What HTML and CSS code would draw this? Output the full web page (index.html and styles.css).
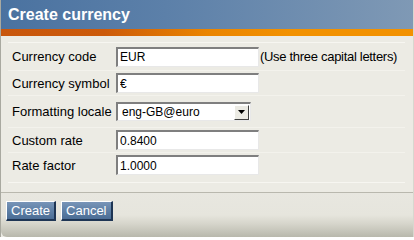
FILE: index.html
```html
<!DOCTYPE html>
<html>
<head>
<meta charset="utf-8">
<link rel="stylesheet" href="styles.css">
</head>
<body>
<div class="dialog">
  <div class="titlebar">Create currency</div>
  <div class="accent"></div>
  <div class="content">
    <div class="rows">
      <div class="row">
        <label class="lbl">Currency code</label>
        <input class="field" type="text" value="EUR">
        <span class="hint">(Use three capital letters)</span>
      </div>
      <div class="row">
        <label class="lbl">Currency symbol</label>
        <input class="field" type="text" value="€">
      </div>
      <div class="row row-select">
        <label class="lbl">Formatting locale</label>
        <div class="select">
          <span class="select-text">eng-GB@euro</span>
          <span class="select-btn"><svg width="7" height="4" viewBox="0 0 7 4"><path d="M0 0H7L3.5 4Z" fill="#000"/></svg></span>
        </div>
      </div>
      <div class="row">
        <label class="lbl">Custom rate</label>
        <input class="field" type="text" value="0.8400">
      </div>
      <div class="row row-last">
        <label class="lbl">Rate factor</label>
        <input class="field" type="text" value="1.0000">
      </div>
    </div>
  </div>
  <div class="footer">
    <button class="btn">Create</button>
    <button class="btn">Cancel</button>
  </div>
</div>
</body>
</html>
```
FILE: styles.css
```css
html, body {
  margin: 0;
  padding: 0;
  background: #ffffff;
}
body {
  width: 414px;
  height: 237px;
  overflow: hidden;
  font-family: "Liberation Sans", Arial, sans-serif;
}
.dialog {
  width: 414px;
  height: 237px;
  display: flex;
  flex-direction: column;
  background: #ecebe4;
  box-sizing: border-box;
  border-left: 1px solid #a9a9a0;
  border-right: 1px solid #d8d7cf;
}
.titlebar {
  height: 29px;
  box-sizing: border-box;
  padding: 6px 0 0 7px;
  background: linear-gradient(to right, #4a72a0 0%, #5c80a9 40%, #7f99b5 100%);
  color: #ffffff;
  font-weight: bold;
  font-size: 16px;
  line-height: 18px;
}
.accent {
  height: 7px;
  background: linear-gradient(to right, #c8560c 0%, #cc5a0a 25%, #ea8400 50%, #f29100 70%, #f29100 100%);
}
.content {
  padding: 6px 8px 0 7px;
}
.rows {
  border-top: 1px solid #f7f6f1;
  border-bottom: 1px solid #f7f6f1;
}
.row {
  display: flex;
  align-items: center;
  height: 24px;
  border-top: 1px solid #f3f2ec;
}
.row:first-child {
  border-top: none;
  height: 27px;
}
.row-select {
  height: 31px;
}
.row-last {
  height: 24px;
  padding-bottom: 5px;
}
.lbl {
  width: 104px;
  padding-left: 4px;
  font-size: 13px;
  color: #000000;
  white-space: nowrap;
}
.field {
  box-sizing: border-box;
  width: 143px;
  height: 20px;
  margin: 0;
  padding: 0 2px;
  border-top: 2px solid #7f7f7f;
  border-left: 2px solid #7f7f7f;
  border-right: 1px solid #e8e8e8;
  border-bottom: 1px solid #e8e8e8;
  background: #ffffff;
  font-family: "Liberation Sans", Arial, sans-serif;
  font-size: 12px;
  color: #000000;
  outline: none;
}
.hint {
  font-size: 13px;
  margin-left: 1px;
  white-space: nowrap;
  letter-spacing: -0.3px;
}
.select {
  box-sizing: border-box;
  width: 135px;
  height: 19px;
  display: flex;
  align-items: center;
  justify-content: space-between;
  background: #ffffff;
  border-top: 2px solid #7f7f7f;
  border-left: 2px solid #7f7f7f;
  border-right: 1px solid #e8e8e8;
  border-bottom: 1px solid #e8e8e8;
  padding-left: 4px;
}
.select-text {
  font-size: 12px;
}
.select-btn {
  width: 15px;
  height: 15px;
  box-sizing: border-box;
  background: #ecebe4;
  border-top: 1px solid #ffffff;
  border-left: 1px solid #ffffff;
  border-right: 1px solid #404040;
  border-bottom: 1px solid #404040;
  display: flex;
  align-items: center;
  justify-content: center;
  margin-right: 1px;
}
.footer {
  flex: 1;
  margin-top: 9px;
  border-top: 1px solid #b9b8ae;
  padding: 8px 0 0 5px;
  display: flex;
  align-items: flex-start;
  gap: 5px;
  background: linear-gradient(to bottom, #e8e7e0 0%, #e6e5dd 50%, #d6d5cb 70%, #b8b8ac 100%);
  border-bottom-left-radius: 6px;
}
.btn {
  box-sizing: border-box;
  height: 20px;
  padding: 0 4px;
  margin: 0;
  background: linear-gradient(to bottom, #7895b8 0%, #5f80a6 50%, #4b6d95 100%);
  border-top: 1px solid #ffffff;
  border-left: 1px solid #ffffff;
  border-right: 2px solid #1e3554;
  border-bottom: 2px solid #1e3554;
  color: #ffffff;
  font-family: "Liberation Sans", Arial, sans-serif;
  font-size: 13px;
  line-height: 16px;
}
```
